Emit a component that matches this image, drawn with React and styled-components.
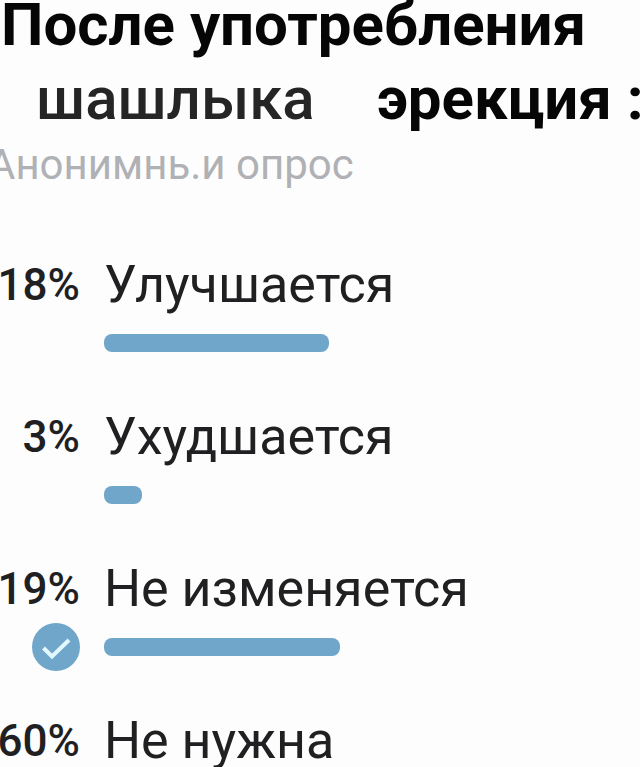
import React from "react";
import styled, { createGlobalStyle } from "styled-components";

const GlobalStyle = createGlobalStyle`
  * {
    box-sizing: border-box;
  }

  body {
    margin: 0;
    background-color: #fdfdfd;
  }
`;

const Poll = styled.main`
  display: flow-root;
  height: 100vh;
  overflow: hidden;
  color: #202022;
  font-family: Roboto, "Noto Sans", sans-serif;
`;

const Title = styled.h1`
  margin: -12px 0 0;
  color: #060607;
  font-size: 60px;
  font-weight: 700;
  line-height: 74px;
  white-space: nowrap;
`;

const TitleLine = styled.span`
  display: flex;
  gap: 62px;
  padding-left: ${(props) => (props.$indent ? "36px" : "1px")};
`;

const Subject = styled.span`
  color: #252525;
  font-weight: 500;
`;

const PollType = styled.p`
  margin: 7px 0 0 -12px;
  color: #b0b1b5;
  font-size: 42px;
  line-height: 44px;
  white-space: nowrap;
`;

const OptionList = styled.ul`
  margin: 68px 0 0;
  padding: 0;
  list-style: none;
`;

const Option = styled.li`
  display: grid;
  grid-template-columns: 80px 1fr;
  grid-template-rows: 60px 56px;
  column-gap: 24px;
  align-items: center;
  height: 152px;
`;

const Percent = styled.span`
  justify-self: end;
  font-size: 44px;
  font-weight: 500;
  line-height: 60px;
`;

const Label = styled.span`
  font-size: 52px;
  line-height: 60px;
  white-space: nowrap;
`;

const Mark = styled.span`
  display: flex;
  justify-content: flex-end;
`;

const Bar = styled.div`
  height: 18px;
  border-radius: 8px;
  background-color: #6fa6ca;
`;

const options = [
  { percent: 18, label: "Улучшается", width: 42 },
  { percent: 3, label: "Ухудшается", width: 7 },
  { percent: 19, label: "Не изменяется", width: 44, chosen: true },
  { percent: 60, label: "Не нужна", width: 100 },
];

const CheckIcon = () => (
  <svg width="48" height="48" viewBox="0 0 48 48">
    <circle cx="24" cy="24" r="24" fill="#6fa6ca" />
    <path
      d="M11.5 25l8.5 8.5L37 17"
      fill="none"
      stroke="#e2f8ff"
      strokeWidth="4"
    />
  </svg>
);

const App = () => {
  return (
    <>
      <GlobalStyle />
      <Poll>
        <Title>
          <TitleLine>После употребления</TitleLine>
          <TitleLine $indent>
            <Subject>шашлыка</Subject> <span>эрекция :</span>
          </TitleLine>
        </Title>
        <PollType>Анонимнь.и опрос</PollType>
        <OptionList>
          {options.map((item) => (
            <Option key={item.label}>
              <Percent>{item.percent}%</Percent>
              <Label>{item.label}</Label>
              <Mark>{item.chosen && <CheckIcon />}</Mark>
              <Bar style={{ width: `${item.width}%` }} />
            </Option>
          ))}
        </OptionList>
      </Poll>
    </>
  );
};

export default App;
